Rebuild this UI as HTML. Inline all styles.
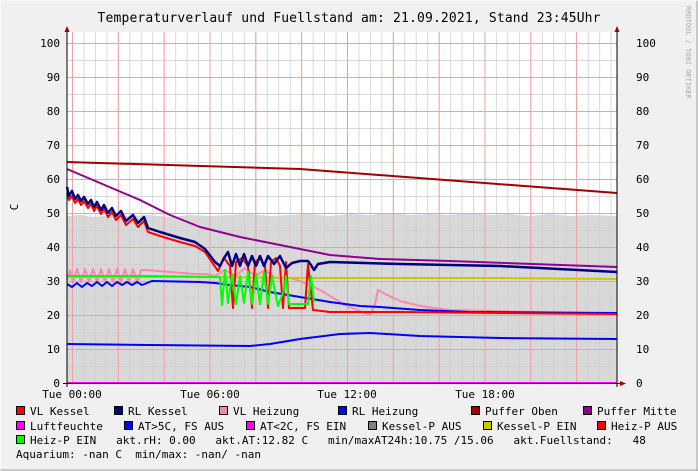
<!DOCTYPE html>
<html><head><meta charset="utf-8"><style>
body{margin:0;background:#f0f0f0;}
#w{position:relative;width:698px;height:471px;background:#f0f0f0;overflow:hidden;font-family:"DejaVu Sans Mono","Liberation Mono",monospace;}
svg{position:absolute;left:0;top:0}
</style></head><body><div id="w">
<svg width="698" height="471" viewBox="0 0 698 471" font-family="DejaVu Sans Mono, Liberation Mono, monospace">
<defs>
<pattern id="mv" patternUnits="userSpaceOnUse" x="72" y="0" width="11.458" height="471"><line x1="0.5" y1="0" x2="0.5" y2="471" stroke="#d0d0d0" stroke-width="1"/></pattern>
<pattern id="mh" patternUnits="userSpaceOnUse" x="0" y="43" width="698" height="17"><line x1="0" y1="0.5" x2="698" y2="0.5" stroke="#d0d0d0" stroke-width="1"/></pattern>
<pattern id="Mv" patternUnits="userSpaceOnUse" x="72" y="0" width="45.83" height="471"><line x1="0.5" y1="0" x2="0.5" y2="471" stroke="#f0a0a0" stroke-width="1"/></pattern>
<pattern id="Mh" patternUnits="userSpaceOnUse" x="0" y="43" width="698" height="34"><line x1="0" y1="0.5" x2="698" y2="0.5" stroke="#f0a0a0" stroke-width="1"/></pattern>
</defs>
<rect x="0" y="0" width="698" height="471" fill="#f0f0f0"/>
<line x1="697" y1="0" x2="697" y2="471" stroke="#a0a0a0"/><line x1="0" y1="470" x2="698" y2="470" stroke="#a0a0a0"/>
<line x1="0" y1="0" x2="0" y2="471" stroke="#ffffff"/><line x1="0" y1="0" x2="698" y2="0" stroke="#ffffff"/>
<rect x="67" y="32" width="550" height="351" fill="#ffffff"/>
<polygon fill="#d8d8d8" points="67,383 67,216 80,215 95,217 110,215 130,216 150,215 170,217 190,215 210,216 230,215 250,214 270,216 290,215 310,214 330,216 350,214 370,215 390,213 410,215 430,214 450,215 470,213 490,215 510,214 530,216 550,214 570,216 590,215 617,216 617,383"/>
<rect x="67" y="32" width="550" height="351" fill="url(#mv)" opacity="0.8"/>
<rect x="67" y="32" width="550" height="351" fill="url(#mh)" opacity="0.8"/>
<rect x="67" y="32" width="550" height="351" fill="url(#Mv)"/>
<rect x="67" y="32" width="550" height="351" fill="url(#Mh)"/>
<g fill="none" stroke-linejoin="round">
<polyline stroke="#a00000" stroke-width="2" points="67,162 300,169 617,193"/>
<polyline stroke="#900090" stroke-width="2" points="67,169 100,183 140,200 170,215 200,227 240,237 280,245 330,255 380,259 450,261 617,267"/>
<polyline stroke="#0000ff" stroke-width="2" points="67,344 150,345 250,346 270,344 300,339 340,334 370,333 420,336 500,338 617,339"/>
<polyline stroke="#ff88aa" stroke-width="2" points="67,280 70,270 73,282 77,269 81,282 85,269 89,282 93,269 97,282 101,269 105,282 109,269 113,282 117,269 121,282 125,269 129,282 133,269 137,282 141,270 147,270 170,272 195,274 205,274 215,276 225,270 235,276 245,268 255,276 265,270 275,278 290,278 300,281 320,290 345,305 370,315 375,304 378,290 385,294 400,301 420,306 450,310 617,314"/>
<polyline stroke="#0000ff" stroke-width="2" points="67,284 72,287 77,283 82,287 87,283 92,286 97,282 102,286 107,282 112,286 117,282 122,285 127,282 132,285 137,282 142,285 147,283 152,281 200,282 215,283 230,285 250,287 270,292 300,297 330,302 360,306 380,307 420,310 470,312 617,313"/>
<polyline stroke="#c8c800" stroke-width="2" points="67,277 200,277 300,278 400,278 500,278 617,279"/>
<polyline stroke="#ff0000" stroke-width="2" points="67,193 69,200 72,196 75,203 78,199 81,205 84,201 88,208 91,204 94,211 97,206 101,214 104,209 108,217 112,212 116,220 121,215 126,225 133,219 138,227 144,221 148,232 160,236 180,242 195,246 205,252 218,271 224,258 230,266 233,308 236,262 242,258 248,266 252,308 255,262 260,258 265,266 268,308 271,262 276,258 280,266 283,308 286,262 289,308 305,308 308,264 313,310 330,312 400,312 500,313 617,314"/>
<polyline stroke="#00ff00" stroke-width="2" points="67,276 150,276 215,277 220,277 222,305 225,270 228,303 232,274 236,304 240,276 244,303 248,272 252,304 256,274 260,304 264,272 268,304 272,276 278,306 284,290 286,276 289,304 308,304 311,276 314,302"/>
<polyline stroke="#000080" stroke-width="2.5" points="67,187 69,196 72,191 75,199 78,195 81,201 84,197 88,204 91,200 94,207 97,202 101,210 104,205 108,213 112,208 116,216 121,211 126,221 133,215 138,223 144,217 148,228 160,232 180,238 195,242 205,249 215,262 220,266 224,258 228,252 232,266 236,254 240,266 244,254 248,266 252,256 256,266 260,256 264,266 268,256 274,264 280,256 286,268 292,263 300,261 308,261 311,265 314,270 318,264 330,262 400,264 500,266 617,272"/>
<line x1="67" y1="383" x2="617" y2="383" stroke="#ff00ff" stroke-width="2"/>
</g>
<line x1="67" y1="30" x2="67" y2="387" stroke="#000" stroke-width="1"/>
<line x1="617" y1="30" x2="617" y2="387" stroke="#000" stroke-width="1"/>
<line x1="63" y1="383.5" x2="622" y2="383.5" stroke="#000" stroke-width="1"/>
<polygon points="67,26 64.5,32 69.5,32" fill="#a00000"/>
<polygon points="617,26 614.5,32 619.5,32" fill="#a00000"/>
<polygon points="626,383.5 620,381 620,386" fill="#a00000"/>
<g font-size="11" fill="#000" text-anchor="end">
<text x="60" y="47">100</text><text x="60" y="81">90</text><text x="60" y="115">80</text><text x="60" y="149">70</text><text x="60" y="183">60</text><text x="60" y="217">50</text><text x="60" y="251">40</text><text x="60" y="285">30</text><text x="60" y="319">20</text><text x="60" y="353">10</text><text x="60" y="387">0</text>
</g>
<g font-size="11" fill="#000" text-anchor="start">
<text x="636" y="47">100</text><text x="636" y="81">90</text><text x="636" y="115">80</text><text x="636" y="149">70</text><text x="636" y="183">60</text><text x="636" y="217">50</text><text x="636" y="251">40</text><text x="636" y="285">30</text><text x="636" y="319">20</text><text x="636" y="353">10</text><text x="636" y="387">0</text>
</g>
<g font-size="11" fill="#000" text-anchor="middle">
<text x="72" y="398">Tue 00:00</text><text x="210" y="398">Tue 06:00</text><text x="347" y="398">Tue 12:00</text><text x="485" y="398">Tue 18:00</text>
</g>
<text x="349" y="22" font-size="13" text-anchor="middle" fill="#000" textLength="503" lengthAdjust="spacing">Temperaturverlauf und Fuellstand am: 21.09.2021, Stand 23:45Uhr</text>
<text transform="translate(18,207) rotate(-90)" font-size="11" text-anchor="middle" fill="#000">C</text>
<text transform="translate(686,6) rotate(90)" font-size="7" fill="#aaa">RRDTOOL / TOBI OETIKER</text>
<g font-size="11" fill="#000">
<rect x="16.5" y="406.5" width="8" height="8" fill="#ff0000" stroke="#000"/><text x="30" y="415">VL Kessel</text>
<rect x="114.5" y="406.5" width="8" height="8" fill="#000080" stroke="#000"/><text x="128" y="415">RL Kessel</text>
<rect x="219.5" y="406.5" width="8" height="8" fill="#ff88aa" stroke="#000"/><text x="233" y="415">VL Heizung</text>
<rect x="338.5" y="406.5" width="8" height="8" fill="#0000ff" stroke="#000"/><text x="352" y="415">RL Heizung</text>
<rect x="471.5" y="406.5" width="8" height="8" fill="#a00000" stroke="#000"/><text x="485" y="415">Puffer Oben</text>
<rect x="583.5" y="406.5" width="8" height="8" fill="#900090" stroke="#000"/><text x="597" y="415">Puffer Mitte</text>
<rect x="16.5" y="421.5" width="8" height="8" fill="#ff00ff" stroke="#000"/><text x="30" y="430">Luftfeuchte</text>
<rect x="124.5" y="421.5" width="8" height="8" fill="#0000ff" stroke="#000"/><text x="138" y="430">AT&gt;5C, FS AUS</text>
<rect x="246.5" y="421.5" width="8" height="8" fill="#ff00ff" stroke="#000"/><text x="260" y="430">AT&lt;2C, FS EIN</text>
<rect x="368.5" y="421.5" width="8" height="8" fill="#808080" stroke="#000"/><text x="382" y="430">Kessel-P AUS</text>
<rect x="483.5" y="421.5" width="8" height="8" fill="#c8c800" stroke="#000"/><text x="497" y="430">Kessel-P EIN</text>
<rect x="597.5" y="421.5" width="8" height="8" fill="#ff0000" stroke="#000"/><text x="611" y="430">Heiz-P AUS</text>
<rect x="16.5" y="435.5" width="8" height="8" fill="#00ff00" stroke="#000"/><text x="30" y="444" xml:space="preserve">Heiz-P EIN   akt.rH: 0.00   akt.AT:12.82 C   min/maxAT24h:10.75 /15.06   akt.Fuellstand:   48</text>
<text x="16" y="458" xml:space="preserve">Aquarium: -nan C  min/max: -nan/ -nan</text>
</g>
</svg>
</div></body></html>
